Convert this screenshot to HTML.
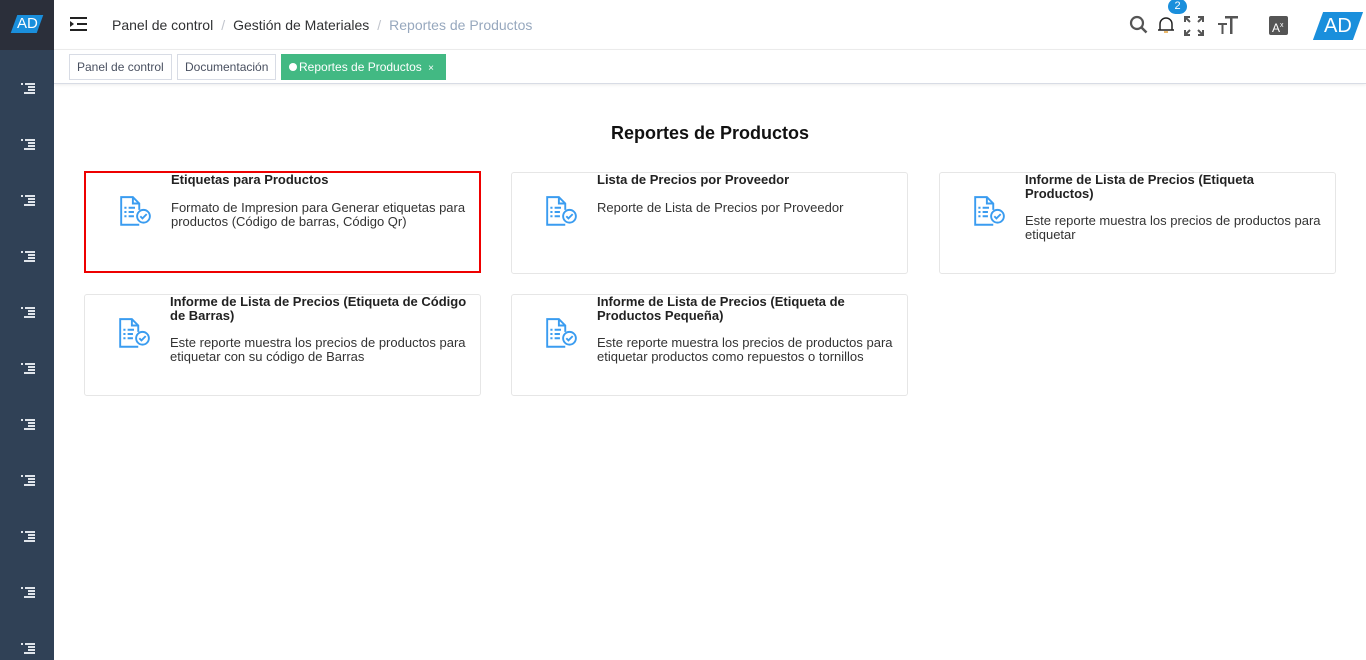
<!DOCTYPE html>
<html><head><meta charset="utf-8"><style>
*{box-sizing:border-box;margin:0;padding:0}
body{width:1366px;height:660px;overflow:hidden;font-family:"Liberation Sans",sans-serif;background:#fff;position:relative;color:#303133}
.sb{position:absolute;left:0;top:0;width:54px;height:660px;background:#304156}
.logo{position:absolute;left:0;top:0;width:54px;height:50px;background:#2b2f3a}
.badge{position:absolute;background:#1a8fdc;color:#fff;font-size:15px;transform:skewX(-20deg);text-align:center}
.badge span{display:inline-block;transform:skewX(20deg)}
.mi{position:absolute;left:21px;width:14px;height:12px}
.mi i{position:absolute;height:2px;background:#dfe4ea;right:0}
.hdr{position:absolute;left:54px;top:0;right:0;height:50px;border-bottom:1px solid #eee}
.bc{position:absolute;left:58px;top:17px;font-size:14px;color:#303133}
.bc .s{color:#c0c4cc;margin:0 8px}
.bc .l{color:#97a8be}
.tags{position:absolute;left:54px;top:50px;right:0;height:34px;border-bottom:1px solid #d8dce5;box-shadow:0 1px 3px rgba(0,0,0,.08)}
.tag{position:absolute;top:4px;height:26px;border:1px solid #d8dce5;font-size:12px;line-height:24px;padding:0 7px;color:#495060;background:#fff}
h1{position:absolute;left:54px;right:0;top:123px;text-align:center;font-size:18px;font-weight:bold;color:#111}
.card{position:absolute;width:397px;height:102px;border:1px solid #e6e6e6;border-radius:3px}
.card b{position:absolute;left:85px;top:0;font-size:13px;color:#222;line-height:14px;width:300px}
.card p{position:absolute;left:85px;font-size:13px;color:#333;line-height:14px;width:305px}
.card svg{position:absolute;left:32px;top:22px}
</style></head><body>
<div class="sb"><div class="logo"><div class="badge" style="left:14px;top:15px;width:26px;height:18px;line-height:18px"><span>AD</span></div></div>
</div>
<div class="hdr">
<svg style="position:absolute;left:16px;top:16px" width="18" height="16" viewBox="0 0 18 16"><rect x="0" y="1" width="17" height="2" fill="#222"/><rect x="7" y="7" width="10" height="2" fill="#222"/><rect x="0" y="13" width="17" height="2" fill="#222"/><path d="M0 5l4 3-4 3z" fill="#222"/></svg>
<div class="bc">Panel de control<span class="s">/</span>Gestión de Materiales<span class="s">/</span><span class="l">Reportes de Productos</span></div>
<svg style="position:absolute;left:1075px;top:15px" width="20" height="20" viewBox="0 0 20 20"><circle cx="8" cy="8" r="6" fill="none" stroke="#555" stroke-width="2.2"/><path d="M12.5 12.5l5 5" stroke="#555" stroke-width="2.5"/></svg>
<svg style="position:absolute;left:1103px;top:15px" width="18" height="20" viewBox="0 0 18 20"><path d="M3 15V9a6 6 0 0112 0v6zM1 15h16" fill="none" stroke="#222" stroke-width="1.5"/><path d="M7 17h4" stroke="#e6a23c" stroke-width="1.5"/></svg>
<div style="position:absolute;left:1114px;top:-1px;width:19px;height:15px;border-radius:8px;background:#1a8fdc;color:#fff;font-size:11px;text-align:center;line-height:15px">2</div>
<svg style="position:absolute;left:1130px;top:16px" width="20" height="20" viewBox="0 0 20 20" fill="none" stroke="#555" stroke-width="2"><path d="M1 6V1h5M14 1h5v5M19 14v5h-5M6 19H1v-5M2 2l4 4M18 2l-4 4M18 18l-4-4M2 18l4-4"/></svg>
<svg style="position:absolute;left:1163px;top:15px" width="22" height="20" viewBox="0 0 22 20" fill="#555"><rect x="8" y="1" width="13" height="2.5"/><rect x="13" y="1" width="2.5" height="18"/><rect x="1" y="8" width="9" height="2"/><rect x="4.5" y="8" width="2" height="11"/></svg>
<div style="position:absolute;left:1215px;top:16px;width:19px;height:19px;background:#555;border-radius:2px;color:#fff;font-size:12px;line-height:19px;padding-left:3px">A<sup style="font-size:7px">x</sup></div>
<div class="badge" style="left:1264px;top:12px;width:40px;height:28px;line-height:28px;font-size:20px"><span>AD</span></div>
</div>
<div class="tags">
<div class="tag" style="left:15px">Panel de control</div>
<div class="tag" style="left:123px">Documentación</div>
<div class="tag" style="left:227px;background:#42b983;border-color:#42b983;color:#fff;width:165px"><span style="display:inline-block;width:8px;height:8px;border-radius:50%;background:#fff;margin-right:2px"></span>Reportes de Productos <span style="font-size:10px;margin-left:3px">×</span></div>
</div>
<h1>Reportes de Productos</h1>
<div class="card" style="left:84px;top:171px;border:2px solid #e00;border-radius:0"><svg width="34" height="34" viewBox="0 0 32 32" fill="none" stroke="#3a9cf0" stroke-width="1.8"><path d="M20 28H3V2h11l6 6v6M14 2v6h6"/><path d="M6 12h2M10 12h6M6 16h2M10 16h5M6 20h2M10 20h5"/><circle cx="24" cy="20" r="6"/><path d="M21 20l2 2 4-4"/></svg><b>Etiquetas para Productos</b><p style="top:28px">Formato de Impresion para Generar etiquetas para productos (Código de barras, Código Qr)</p></div>
<div class="card" style="left:511px;top:172px"><svg width="34" height="34" viewBox="0 0 32 32" fill="none" stroke="#3a9cf0" stroke-width="1.8"><path d="M20 28H3V2h11l6 6v6M14 2v6h6"/><path d="M6 12h2M10 12h6M6 16h2M10 16h5M6 20h2M10 20h5"/><circle cx="24" cy="20" r="6"/><path d="M21 20l2 2 4-4"/></svg><b>Lista de Precios por Proveedor</b><p style="top:28px">Reporte de Lista de Precios por Proveedor</p></div>
<div class="card" style="left:939px;top:172px"><svg width="34" height="34" viewBox="0 0 32 32" fill="none" stroke="#3a9cf0" stroke-width="1.8"><path d="M20 28H3V2h11l6 6v6M14 2v6h6"/><path d="M6 12h2M10 12h6M6 16h2M10 16h5M6 20h2M10 20h5"/><circle cx="24" cy="20" r="6"/><path d="M21 20l2 2 4-4"/></svg><b>Informe de Lista de Precios (Etiqueta Productos)</b><p style="top:41px">Este reporte muestra los precios de productos para etiquetar</p></div>
<div class="card" style="left:84px;top:294px"><svg width="34" height="34" viewBox="0 0 32 32" fill="none" stroke="#3a9cf0" stroke-width="1.8"><path d="M20 28H3V2h11l6 6v6M14 2v6h6"/><path d="M6 12h2M10 12h6M6 16h2M10 16h5M6 20h2M10 20h5"/><circle cx="24" cy="20" r="6"/><path d="M21 20l2 2 4-4"/></svg><b>Informe de Lista de Precios (Etiqueta de Código de Barras)</b><p style="top:41px">Este reporte muestra los precios de productos para etiquetar con su código de Barras</p></div>
<div class="card" style="left:511px;top:294px"><svg width="34" height="34" viewBox="0 0 32 32" fill="none" stroke="#3a9cf0" stroke-width="1.8"><path d="M20 28H3V2h11l6 6v6M14 2v6h6"/><path d="M6 12h2M10 12h6M6 16h2M10 16h5M6 20h2M10 20h5"/><circle cx="24" cy="20" r="6"/><path d="M21 20l2 2 4-4"/></svg><b>Informe de Lista de Precios (Etiqueta de Productos Pequeña)</b><p style="top:41px">Este reporte muestra los precios de productos para etiquetar productos como repuestos o tornillos</p></div>
<div id="mis"></div>
<script>
var h='';for(var k=0;k<11;k++){var y=83+k*56;h+='<div class="mi" style="top:'+y+'px"><i style="top:0;width:10px"></i><i style="top:3px;width:7px"></i><i style="top:6px;width:7px"></i><i style="top:9px;width:10px"></i><i style="top:0;left:0;width:2px"></i><i style="top:9px;left:3px;width:2px"></i></div>';}
document.getElementById('mis').innerHTML=h;
</script>
</body></html>
